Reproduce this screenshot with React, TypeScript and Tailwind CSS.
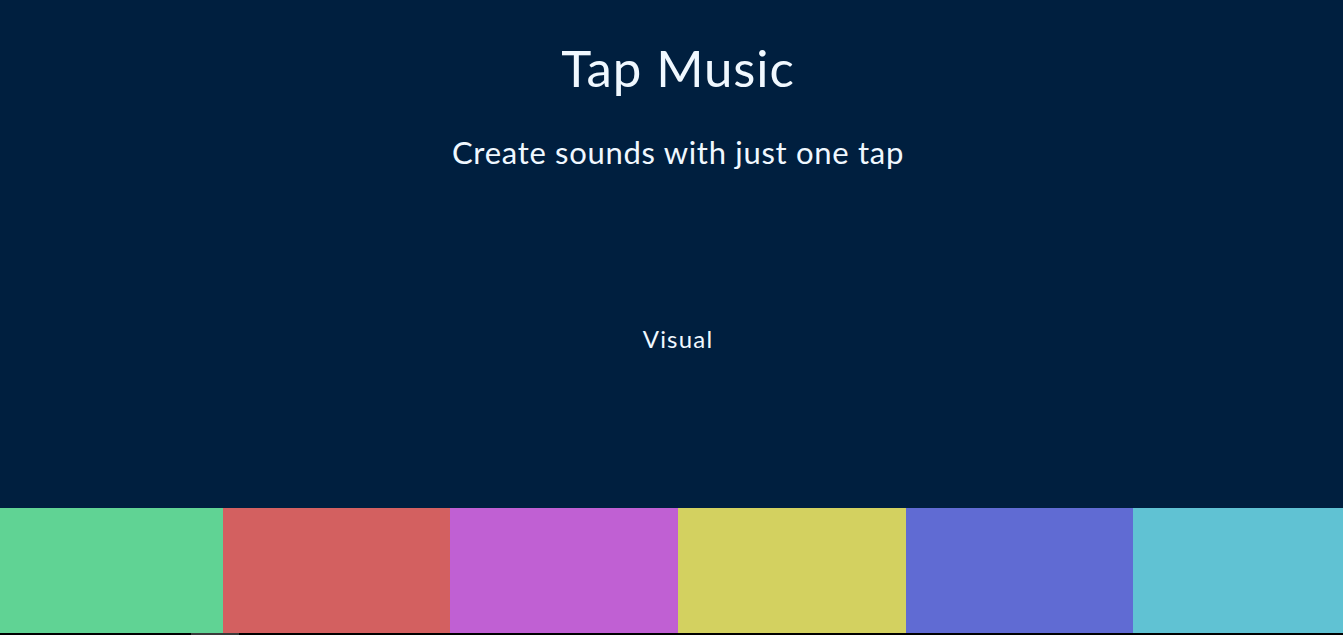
const pads = [
  { color: "bg-[#60d394]", w: "w-[223px]" },
  { color: "bg-[#d36060]", w: "w-[227px]" },
  { color: "bg-[#c060d3]", w: "w-[228px]" },
  { color: "bg-[#d3d160]", w: "w-[228px]" },
  { color: "bg-[#606bd3]", w: "w-[227px]" },
  { color: "bg-[#60c2d3]", w: "flex-1" },
];

export default function App() {
  return (
    <div className="flex h-[635px] w-full flex-col overflow-hidden bg-[#001f3f] font-['Lato',sans-serif] text-[#f0f8ff]">
      <header className="flex h-[508px] flex-col items-center pl-[13px]">
        <h1 className="mt-[38px] text-[51px] leading-[60px] tracking-[0.9px]">Tap Music</h1>
        <p className="mt-[34px] text-[31px] leading-[40px] tracking-[0.7px]">Create sounds with just one tap</p>
        <div className="mt-[152px] text-[24px] leading-[30px] tracking-[1.2px]">Visual</div>
      </header>
      <div className="flex h-[125px]">
        {pads.map((p, i) => (
          <div key={i} className={`${p.w} ${p.color} h-full`} />
        ))}
      </div>
      <div className="flex h-[2px] bg-black">
        <div className="ml-[191px] w-[48px] bg-[#3a3a3a]" />
      </div>
    </div>
  );
}
